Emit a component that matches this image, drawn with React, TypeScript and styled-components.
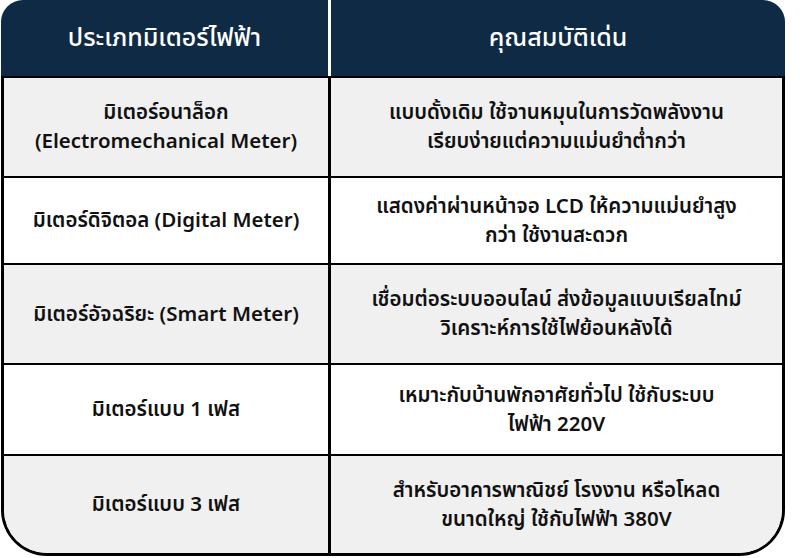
import styled, { createGlobalStyle } from 'styled-components';

const GlobalStyle = createGlobalStyle`
  body {
    margin: 0;
    background: #ffffff;
    font-family: "Noto Sans Thai", "Noto Sans", "Liberation Sans", sans-serif;
  }
`

const Table = styled.div`
  width: 784px;
  margin-left: 1px;
  display: flex;
  flex-direction: column;
`

const Header = styled.div`
  display: grid;
  grid-template-columns: 330px 1fr;
  height: 76px;
  background: #0f2a44;
  border-radius: 22px 22px 0 0;
`

const HeadCell = styled.div<{ $divider?: boolean }>`
  display: flex;
  align-items: center;
  justify-content: center;
  color: #ffffff;
  font-size: 25px;
  font-weight: 500;
  border-right: ${(p) => (p.$divider ? '3px solid #ffffff' : 'none')};
`

const Body = styled.div`
  border: 3px solid #000000;
  border-top: 2px solid #000000;
  border-radius: 0 0 46px 46px;
  overflow: hidden;
`

const Row = styled.div<{ $h: number; $shade?: boolean }>`
  display: grid;
  grid-template-columns: 327px 1fr;
  height: ${(p) => p.$h}px;
  background: ${(p) => (p.$shade ? '#f0f0f0' : '#ffffff')};
  & + & {
    border-top: 2px solid #000000;
  }
`

const Cell = styled.div<{ $divider?: boolean }>`
  display: flex;
  align-items: center;
  justify-content: center;
  text-align: center;
  color: #111111;
  font-size: 20.5px;
  font-weight: 600;
  line-height: 29px;
  padding: 0 10px;
  border-right: ${(p) => (p.$divider ? '3px solid #000000' : 'none')};
`

const rows = [
  {
    h: 98,
    shade: true,
    type: ['มิเตอร์อนาล็อก', '(Electromechanical Meter)'],
    info: ['แบบดั้งเดิม ใช้จานหมุนในการวัดพลังงาน', 'เรียบง่ายแต่ความแม่นยำต่ำกว่า'],
  },
  {
    h: 85,
    shade: false,
    type: ['มิเตอร์ดิจิตอล (Digital Meter)'],
    info: ['แสดงค่าผ่านหน้าจอ LCD ให้ความแม่นยำสูง', 'กว่า ใช้งานสะดวก'],
  },
  {
    h: 98,
    shade: true,
    type: ['มิเตอร์อัจฉริยะ (Smart Meter)'],
    info: ['เชื่อมต่อระบบออนไลน์ ส่งข้อมูลแบบเรียลไทม์', 'วิเคราะห์การใช้ไฟย้อนหลังได้'],
  },
  {
    h: 89,
    shade: false,
    type: ['มิเตอร์แบบ 1 เฟส'],
    info: ['เหมาะกับบ้านพักอาศัยทั่วไป ใช้กับระบบ', 'ไฟฟ้า 220V'],
  },
  {
    h: 97,
    shade: true,
    type: ['มิเตอร์แบบ 3 เฟส'],
    info: ['สำหรับอาคารพาณิชย์ โรงงาน หรือโหลด', 'ขนาดใหญ่ ใช้กับไฟฟ้า 380V'],
  },
]

function App() {
  return (
    <>
      <GlobalStyle />
      <Table>
        <Header>
          <HeadCell $divider>ประเภทมิเตอร์ไฟฟ้า</HeadCell>
          <HeadCell>คุณสมบัติเด่น</HeadCell>
        </Header>
        <Body>
          {rows.map((r, i) => (
            <Row key={i} $h={r.h} $shade={r.shade}>
              <Cell $divider>
                <div>
                  {r.type.map((t) => (
                    <div key={t}>{t}</div>
                  ))}
                </div>
              </Cell>
              <Cell>
                <div>
                  {r.info.map((t) => (
                    <div key={t}>{t}</div>
                  ))}
                </div>
              </Cell>
            </Row>
          ))}
        </Body>
      </Table>
    </>
  )
}

export default App;
